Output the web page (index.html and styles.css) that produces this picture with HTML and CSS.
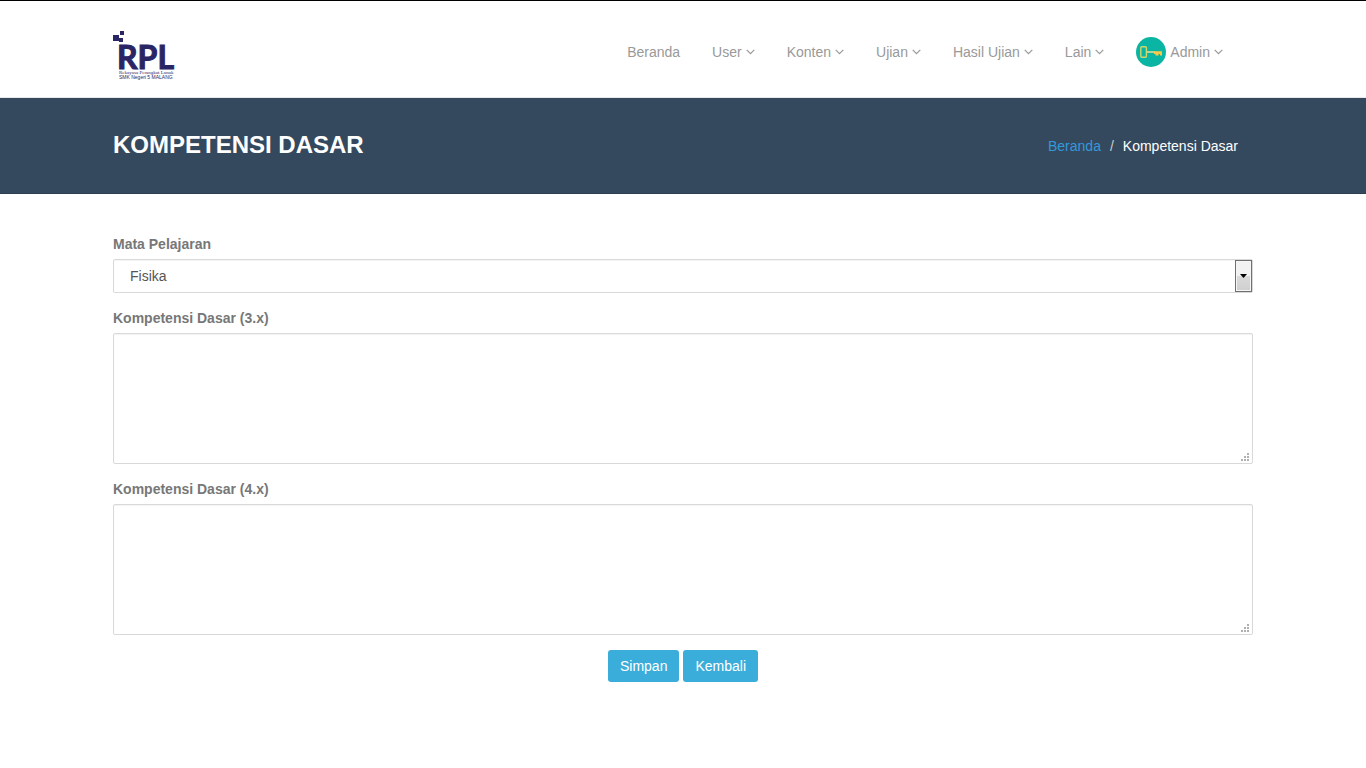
FILE: index.html
```
<!DOCTYPE html>
<html lang="id">
<head>
<meta charset="utf-8">
<title>Kompetensi Dasar</title>
<link rel="stylesheet" href="styles.css">
</head>
<body>
<svg class="defs" aria-hidden="true">
  <symbol id="angle" viewBox="0 0 9 6"><path d="M.7 .8 4.5 4.6 8.3 .8" fill="none" stroke="currentColor" stroke-width="1.2"/></symbol>
</svg>
<header class="header">
  <div class="container header-row">
    <a class="logo" href="#" aria-label="RPL SMK Negeri 5 Malang">
      <svg width="62" height="56" viewBox="0 0 62 56">
        <g fill="#2a2565">
          <rect x="7" y="7" width="4" height="4"/>
          <rect x="0" y="11" width="6" height="6"/>
          <rect x="6" y="14" width="4" height="4"/>
          <text class="logo-name" x="4" y="45">RPL</text>
          <text class="logo-serif" x="6" y="50">Rekayasa Perangkat Lunak</text>
          <text class="logo-sans" x="6" y="55">SMK Negeri 5 MALANG</text>
        </g>
      </svg>
    </a>
    <nav class="nav">
      <a href="#">Beranda</a>
      <a href="#">User <svg class="angle"><use href="#angle"/></svg></a>
      <a href="#">Konten <svg class="angle"><use href="#angle"/></svg></a>
      <a href="#">Ujian <svg class="angle"><use href="#angle"/></svg></a>
      <a href="#">Hasil Ujian <svg class="angle"><use href="#angle"/></svg></a>
      <a href="#">Lain <svg class="angle"><use href="#angle"/></svg></a>
      <a href="#"><svg class="avatar" viewBox="0 0 30 30"><circle cx="15" cy="15" r="15" fill="#0bb5a3"/><rect x="4.8" y="9.7" width="5.6" height="10.6" rx="1" fill="none" stroke="#d5d568" stroke-width="1.4"/><path d="M11 15H19" stroke="#f0e6a0" stroke-width="1.4"/><path d="M18 14.2H26V18.5H24V17H22.5V18.5H19.5V17H18Z" fill="#f7c948"/></svg>Admin <svg class="angle"><use href="#angle"/></svg></a>
    </nav>
  </div>
</header>
<section class="title-band">
  <div class="container title-row">
    <h1>KOMPETENSI DASAR</h1>
    <nav class="breadcrumb" aria-label="Breadcrumb"><a href="#">Beranda</a><span class="slash">/</span><span>Kompetensi Dasar</span></nav>
  </div>
</section>
<main class="container">
  <form class="form">
    <div class="group">
      <label for="mapel">Mata Pelajaran</label>
      <div class="select-wrap">
        <select id="mapel" class="control"><option>Fisika</option></select>
        <span class="select-arrow"><svg width="7" height="4" viewBox="0 0 7 4"><path d="M0 0H7L3.5 4Z"/></svg></span>
      </div>
    </div>
    <div class="group">
      <label for="kd3">Kompetensi Dasar (3.x)</label>
      <textarea id="kd3" class="control"></textarea>
    </div>
    <div class="group">
      <label for="kd4">Kompetensi Dasar (4.x)</label>
      <textarea id="kd4" class="control"></textarea>
    </div>
    <div class="actions">
      <button type="submit">Simpan</button>
      <button type="button">Kembali</button>
    </div>
  </form>
</main>
</body>
</html>
```
FILE: styles.css
```
* { box-sizing: border-box; }
body {
  margin: 0;
  border-top: 1px solid #000;
  background: #fff;
  color: #777;
  font: 14px/20px "Liberation Sans", Arial, sans-serif;
}
a { color: inherit; text-decoration: none; }
.defs { display: none; }
.container { max-width: 1170px; margin: 0 auto; padding: 0 15px; }

.header { border-bottom: 1px solid #e8e8e8; }
.header-row { display: flex; justify-content: space-between; align-items: center; padding: 23px 30px 17px 15px; }
.logo svg { display: block; }
.logo-name { font: bold 32px "Liberation Sans Narrow", Lato, sans-serif; stroke: #2a2565; stroke-width: 1px; }
.logo-serif { font: 5px "Liberation Serif", serif; }
.logo-sans { font: 5px "Liberation Sans", sans-serif; }
.nav { display: flex; align-items: center; gap: 32px; padding-right: 15px; color: #999; }
.nav a { display: flex; align-items: center; gap: 4px; }
.angle { width: 9px; height: 6px; }
.avatar { width: 30px; height: 30px; }

.title-band { background: #34495e; color: #fff; border-bottom: 1px solid #2c3e50; }
.title-row { display: flex; justify-content: space-between; align-items: center; padding: 32px 30px 33px 15px; }
h1 { margin: 0; font-size: 24px; line-height: 30px; }
.breadcrumb { display: flex; padding-top: 2px; }
.breadcrumb a { color: #3498db; }
.slash { padding: 0 9px; color: #ccc; }

.form { padding-top: 40px; }
.group { margin-bottom: 15px; }
label { display: block; margin-bottom: 5px; font-weight: bold; }
.control {
  display: block;
  width: 100%;
  border: 1px solid #d9d9d9;
  border-radius: 2px;
  background: #fff;
  box-shadow: inset 0 1px 1px rgba(0, 0, 0, .05);
  color: #555;
  font: inherit;
}
.select-wrap { position: relative; }
select.control { height: 34px; padding: 0 24px 0 16px; appearance: none; }
.select-arrow {
  position: absolute;
  top: 1px;
  right: 1px;
  bottom: 1px;
  width: 17px;
  display: flex;
  align-items: center;
  justify-content: center;
  border: 1px solid #707070;
  background: linear-gradient(#f2f2f2 50%, #dadada 50%, #cfcfcf);
  box-shadow: inset 0 0 0 1px #f5f5f5;
  pointer-events: none;
}
textarea.control { height: 131px; padding: 6px 12px; resize: vertical; }
textarea::-webkit-resizer {
  background: url("data:image/svg+xml,%3Csvg xmlns='http://www.w3.org/2000/svg' width='8' height='8' fill='%23b0b0b0'%3E%3Cpath d='M6 0h2v2H6zM3 3h2v2H3zM6 3h2v2H6zM0 6h2v2H0zM3 6h2v2H3zM6 6h2v2H6z'/%3E%3C/svg%3E") no-repeat right 3px bottom 2px;
}
.actions { display: flex; justify-content: center; gap: 4px; }
button {
  padding: 6px 12px;
  border: 0;
  border-radius: 3px;
  background: #3badda;
  color: #fff;
  font: inherit;
}
```
